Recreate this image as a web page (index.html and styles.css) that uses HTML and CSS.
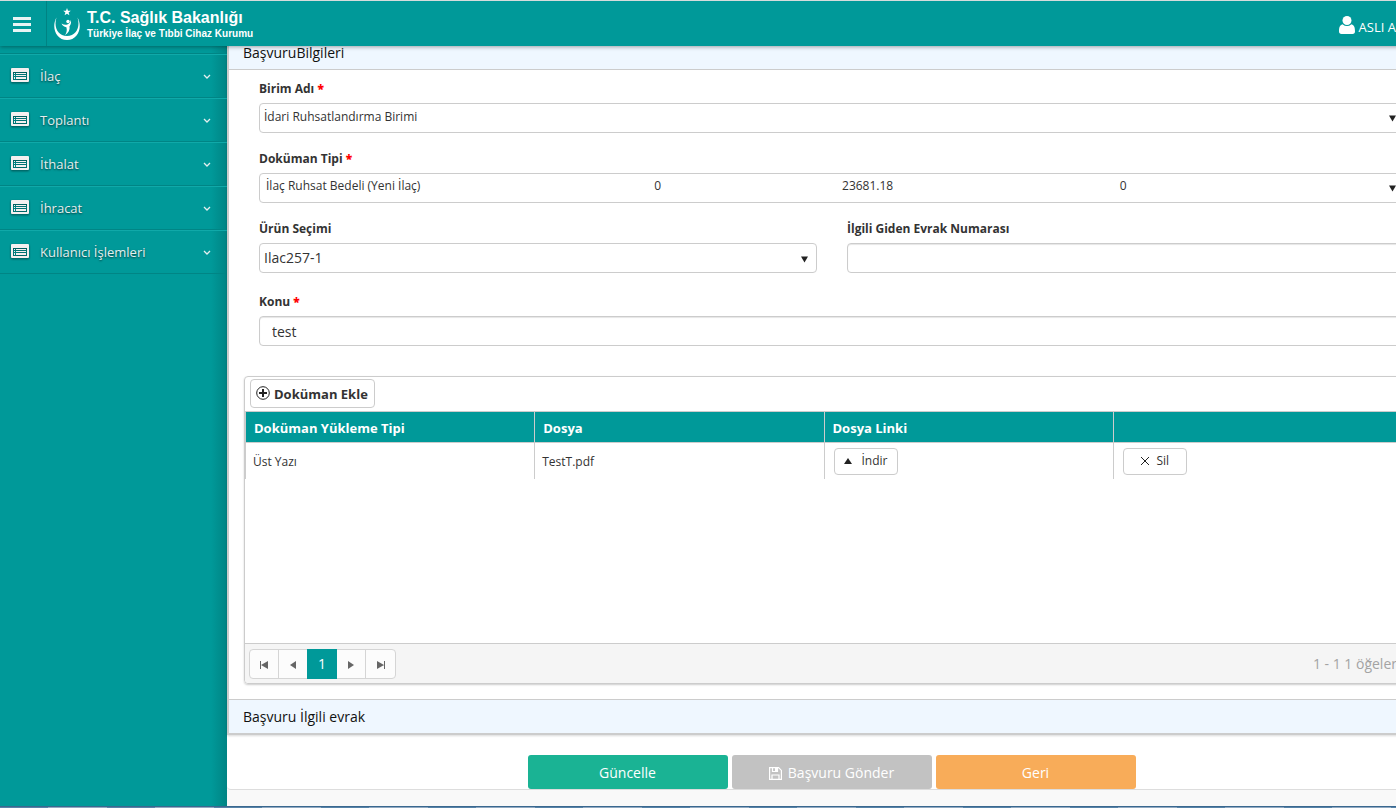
FILE: index.html
```html
<!DOCTYPE html>
<html lang="tr">
<head>
<meta charset="utf-8">
<title>Başvuru Bilgileri</title>
<link rel="stylesheet" href="styles.css">
</head>
<body>
<svg class="sprite" aria-hidden="true">
  <symbol id="list" viewBox="0 0 18 15">
    <path fill-rule="evenodd" d="M1 0h16a1 1 0 0 1 1 1v12a1 1 0 0 1-1 1H1a1 1 0 0 1-1-1V1a1 1 0 0 1 1-1zM2 4v8h14V4z"/>
    <path d="M3 5h1v1H3zM5 5h10v1H5zM3 7h1v1H3zM5 7h10v1H5zM3 9h1v2H3zM5 9h10v2H5z"/>
  </symbol>
  <symbol id="chevron" viewBox="0 0 8 6"><path d="M1 1l3 3 3-3" fill="none" stroke="currentColor" stroke-width="1.3"/></symbol>
  <symbol id="down" viewBox="0 0 8 7"><path d="M1 0.500h7L4.500 6.500z" fill="#222"/></symbol>
</svg>
<header class="topbar">
  <button class="menu-toggle" aria-label="Menü"><span></span><span></span><span></span></button>
  <a class="brand" href="#">
    <svg class="brand-mark" width="28" height="33" viewBox="0 0 28 33" aria-hidden="true">
      <path d="M3.500 9.500C-2 19 3 32 14 32S30 19 24.500 9.500C27.500 19 23.500 28 14 28S.5 19 3.500 9.500z" fill="#fff"/>
      <path d="M14 0l1 2.700 2.800.1-2.200 1.800.8 2.700L14 5.700l-2.400 1.600.8-2.700-2.200-1.800 2.800-.1z" fill="#fff"/>
      <circle cx="15" cy="13.500" r="1.700" fill="#fff"/>
      <path d="M8.500 15.500c2 1.300 4 1.500 5.800 1 2-.6 3.200-2.300 3.500-4.700.7 3 0 5-1.300 6.500.6 3.500-.9 6.500-4.500 9 1.800-3 2.200-5.400 1.400-8.100-2.200-.2-4-1.500-4.900-3.700z" fill="#fff"/>
    </svg>
    <span class="brand-text"><strong>T.C. Sağlık Bakanlığı</strong><small>Türkiye İlaç ve Tıbbi Cihaz Kurumu</small></span>
  </a>
  <a class="user" href="#">
    <svg width="16" height="18" viewBox="0 0 16 18" aria-hidden="true"><circle cx="8" cy="4.500" r="4.500" fill="#fff"/><path d="M3.500 8.200Q8 12 12.500 8.200C15.300 9 16 12 16 15.300Q16 18 13.500 18h-11Q0 18 0 15.300C0 12 .7 9 3.500 8.200z" fill="#fff"/></svg>
    <span>ASLI AR</span>
  </a>
</header>
<div class="layout">
  <nav class="sidebar">
    <ul>
      <li><a href="#"><svg class="item-icon"><use href="#list"/></svg><span>İlaç</span><svg class="chevron"><use href="#chevron"/></svg></a></li>
      <li><a href="#"><svg class="item-icon"><use href="#list"/></svg><span>Toplantı</span><svg class="chevron"><use href="#chevron"/></svg></a></li>
      <li><a href="#"><svg class="item-icon"><use href="#list"/></svg><span>İthalat</span><svg class="chevron"><use href="#chevron"/></svg></a></li>
      <li><a href="#"><svg class="item-icon"><use href="#list"/></svg><span>İhracat</span><svg class="chevron"><use href="#chevron"/></svg></a></li>
      <li><a href="#"><svg class="item-icon"><use href="#list"/></svg><span>Kullanıcı İşlemleri</span><svg class="chevron"><use href="#chevron"/></svg></a></li>
    </ul>
  </nav>
  <main class="content">
    <div class="card">
      <div class="panels">
        <h2 class="panel-title">BaşvuruBilgileri</h2>
        <form class="fields">
          <div class="field wide">
            <label for="birim">Birim Adı <b>*</b></label>
            <div class="select raised"><select id="birim"><option>İdari Ruhsatlandırma Birimi</option></select><svg><use href="#down"/></svg></div>
          </div>
          <div class="field wide">
            <label for="tip">Doküman Tipi <b>*</b></label>
            <div class="select raised indented">
              <select id="tip"><option>İlaç Ruhsat Bedeli (Yeni İlaç)</option></select>
              <div class="select-columns"><span>0</span><span>23681.18</span><span>0</span></div>
              <svg><use href="#down"/></svg>
            </div>
          </div>
          <div class="field">
            <label for="urun">Ürün Seçimi</label>
            <div class="select large"><select id="urun"><option>Ilac257-1</option></select><svg><use href="#down"/></svg></div>
          </div>
          <div class="field">
            <label for="evrak">İlgili Giden Evrak Numarası</label>
            <input id="evrak" type="text">
          </div>
          <div class="field wide subject">
            <label for="konu">Konu <b>*</b></label>
            <input id="konu" type="text" value="test">
          </div>
        </form>
        <section class="grid">
          <div class="toolbar">
            <button class="btn add"><svg width="14" height="14" viewBox="0 0 14 14" aria-hidden="true"><circle cx="7" cy="7" r="6.300" fill="none" stroke="#222"/><path d="M3 7h8M7 3v8" stroke="#222" stroke-width="2"/></svg>Doküman Ekle</button>
          </div>
          <div class="grid-body">
            <table>
              <thead><tr><th>Doküman Yükleme Tipi</th><th>Dosya</th><th>Dosya Linki</th><th></th></tr></thead>
              <tbody><tr>
                <td>Üst Yazı</td><td>TestT.pdf</td>
                <td class="action"><button class="btn row-btn download"><svg width="8" height="7" viewBox="0 0 8 7" aria-hidden="true"><path d="M4 0l4 6H0z" fill="#222"/></svg>İndir</button></td>
                <td class="action"><button class="btn row-btn"><svg width="10" height="10" viewBox="0 0 10 10" aria-hidden="true"><path d="M1 1l8 8M9 1L1 9" stroke="#222"/></svg>Sil</button></td>
              </tr></tbody>
            </table>
          </div>
          <div class="pager">
            <div class="pages">
              <button aria-label="İlk sayfa"><svg width="8" height="8" viewBox="0 0 8 8"><path d="M0 0h1v8H0zM8 0v8L1 4z"/></svg></button>
              <button aria-label="Önceki sayfa"><svg width="8" height="8" viewBox="0 0 8 8"><path d="M7 0v8L1 4z"/></svg></button>
              <button class="current">1</button>
              <button aria-label="Sonraki sayfa"><svg width="8" height="8" viewBox="0 0 8 8"><path d="M1 0v8l6-4z"/></svg></button>
              <button aria-label="Son sayfa"><svg width="8" height="8" viewBox="0 0 8 8"><path d="M7 0h1v8H7zM0 0v8l7-4z"/></svg></button>
            </div>
            <span class="count">1 - 1 1 öğeler</span>
          </div>
        </section>
        <h2 class="panel-title last">Başvuru İlgili evrak</h2>
      </div>
      <div class="actions">
        <button class="update">Güncelle</button>
        <button class="send" disabled><svg width="13" height="13" viewBox="0 0 13 13" aria-hidden="true"><path d="M.6.6h9L12.400 3.400v9H.6zM3 12V8h7v4M3.500 1v3.500h5V1" fill="none" stroke="#fff" stroke-width="1.200"/><path d="M6 1h2v3H6z" fill="#fff"/></svg>Başvuru Gönder</button>
        <button class="back">Geri</button>
      </div>
    </div>
  </main>
</div>
<div class="taskbar"></div>
</body>
</html>
```
FILE: styles.css
```css
* { box-sizing: border-box; }

body {
  margin: 0;
  height: 100vh;
  display: flex;
  flex-direction: column;
  overflow: hidden;
  background: #f9f9f9;
  color: #333;
  font: 14px/20px "Open Sans", sans-serif;
}

button, input, select { font: inherit; color: inherit; }
button { cursor: pointer; }
a { color: inherit; text-decoration: none; }
.sprite { display: none; }

.topbar {
  display: flex;
  flex: none;
  width: calc(100% + 40px);
  height: 46px;
  border-top: 1px solid #d5dcdc;
  background: #009999;
  color: #fff;
  position: relative;
  z-index: 2;
  box-shadow: 0 1px 4px rgba(0, 0, 0, .35);
}

.menu-toggle {
  display: flex;
  flex-direction: column;
  justify-content: center;
  gap: 3px;
  width: 47px;
  padding: 2px 0 0 13px;
  border: 0;
  border-right: 1px solid #008383;
  background: none;
}

.menu-toggle span { width: 18px; height: 3px; background: #e8f4f4; }

.brand { display: flex; align-items: center; gap: 6px; padding: 1px 0 0 6px; }
.brand-text { display: flex; flex-direction: column; font-family: "Liberation Sans", Arial, sans-serif; white-space: nowrap; }
.brand-text strong { font-size: 16px; line-height: 18px; }
.brand-text small { font-size: 10px; line-height: 13px; font-weight: bold; }

.user { display: flex; align-items: center; gap: 4px; margin-left: auto; padding: 6px 32px 0 0; font-size: 13px; }
.user svg { margin-bottom: 4px; }

.layout { display: flex; flex: 1; min-height: 0; width: calc(100% + 40px); }

.sidebar {
  flex: none;
  width: 227px;
  padding-top: 7px;
  background: linear-gradient(to left, #008484, rgba(0, 153, 153, 0) 16px) #009999;
  color: #e4efef;
  text-shadow: 0 1px 2px rgba(0, 0, 0, .6);
}

.sidebar ul { margin: 0; padding: 0; list-style: none; border-top: 1px solid #008585; }

.sidebar a {
  display: flex;
  align-items: center;
  height: 44px;
  padding: 0 16px 0 11px;
  border-top: 1px solid #10a9a9;
  border-bottom: 1px solid #008585;
  font-size: 13px;
}

.item-icon { width: 18px; height: 15px; margin: 0 11px 2px 0; fill: #f5f0f0; filter: drop-shadow(0 1px 1px rgba(0, 0, 0, .5)); }
.chevron { width: 8px; height: 6px; margin: 2px 0 0 auto; }

.content { flex: 1; min-width: 0; }

.card {
  margin-top: -11px;
  background: #fff;
  border-bottom: 1px solid #ddd;
  border-bottom-left-radius: 4px;
}

.panels { border: 1px solid #ccc; border-width: 0 1px 1px 2px; box-shadow: 0 1px 2px rgba(0, 0, 0, .15); }

.panel-title {
  margin: 0;
  padding: 8px 14px 6px;
  border-bottom: 1px solid #ccc;
  background: #eff7ff;
  color: #111;
  font-size: 14px;
  line-height: 20px;
  font-weight: normal;
}

.panel-title.last { border-top: 1px solid #ccc; padding-top: 7px; }

.fields {
  display: grid;
  grid-template-columns: 1fr 1fr;
  gap: 15px 30px;
  padding: 8px 30px 30px;
}

.field { display: flex; flex-direction: column; gap: 4px; min-width: 0; }
.wide { grid-column: 1 / -1; }
.subject { padding-top: 3px; }
.field label { font-size: 12px; font-weight: bold; line-height: 21px; }
.field label b { color: #f00; }

.select { display: grid; align-items: center; font-size: 12px; }
.select > * { grid-area: 1 / 1; }
.select svg { width: 8px; height: 7px; margin-right: 9px; justify-self: end; pointer-events: none; }

select, input {
  width: 100%;
  height: 30px;
  border: 1px solid #ccc;
  border-radius: 4px;
  background: #fff;
  outline: 0;
}

select { appearance: none; padding: 0 24px 0 4px; }
.raised select { padding-bottom: 3px; }
.raised.indented select { padding: 0 24px 4px 6px; }
.large { font-size: 14px; }
.select.large svg { margin-top: 2px; }
input { padding: 0 12px; box-shadow: inset 0 1px 1px rgba(0, 0, 0, .1); }

.select-columns {
  display: grid;
  grid-template-columns: 25% 37% 1fr;
  margin-left: 34.5%;
  padding-bottom: 4px;
  pointer-events: none;
}

.grid { margin: 0 15px 15px; border: 1px solid #ccc; border-radius: 4px; box-shadow: 0 1px 2px rgba(0, 0, 0, .2); }
.toolbar { padding: 2px 5px 3px; }

.btn {
  display: inline-flex;
  align-items: center;
  justify-content: center;
  border: 1px solid #ccc;
  border-radius: 4px;
  background: #fff;
}

.add { display: flex; gap: 4px; height: 29px; padding: 0 6px 0 5px; font-size: 13px; font-weight: bold; }
.add svg { margin-bottom: 2px; }
.row-btn { gap: 6px; width: 64px; height: 27px; padding: 0; }
.download { gap: 10px; }

.grid-body { height: 232px; padding-right: 17px; background: linear-gradient(#ccc 1px, #009999 1px, #009999 31px, #ccc 31px, #ccc 32px, #fff 32px); }

table { width: 100%; table-layout: fixed; border-collapse: separate; border-spacing: 0; font-size: 12px; }
th { height: 32px; padding: 2px 8px 0; border-left: 1px solid #ccc; text-align: left; font-size: 13px; color: #fff; }
td { height: 36px; padding: 1px 7px 0; border-left: 1px solid #ccc; }
.action { padding: 0 9px; }

.pager {
  display: flex;
  align-items: center;
  justify-content: space-between;
  height: 40px;
  padding: 0 22px 0 4px;
  border-top: 1px solid #ccc;
  border-radius: 0 0 4px 4px;
  background: #f5f5f5;
}

.pages { display: flex; border: 1px solid #d5d5d5; border-radius: 4px; background: #fcfcfc; }
.pages button { width: 29px; height: 28px; padding: 0; border: 0; border-right: 1px solid #d5d5d5; background: none; }
.pages button:last-child { border: 0; }
.pages .current { width: 30px; height: 30px; margin: -1px 0 -1px -1px; border: 0; background: #009999; color: #fff; }
.pages svg { fill: #666; vertical-align: middle; }
.count { color: #a3a3a3; }

.actions { display: flex; justify-content: center; gap: 4px; padding-top: 20px; }

.actions button {
  display: flex;
  align-items: center;
  justify-content: center;
  gap: 6px;
  width: 200px;
  height: 34px;
  padding: 2px 0 0;
  border: 0;
  border-radius: 3px;
  color: #fff;
}

.update { background: #1ab394; }
.send { background: #c2c2c2; }
.back { background: #f8ac59; }

.taskbar {
  flex: none;
  height: 2px;
  border-top: 1px solid #3a688f;
  background: repeating-linear-gradient(90deg, #5783a8 0, #5783a8 48px, #91a9c1 48px, #91a9c1 107px);
}
```
